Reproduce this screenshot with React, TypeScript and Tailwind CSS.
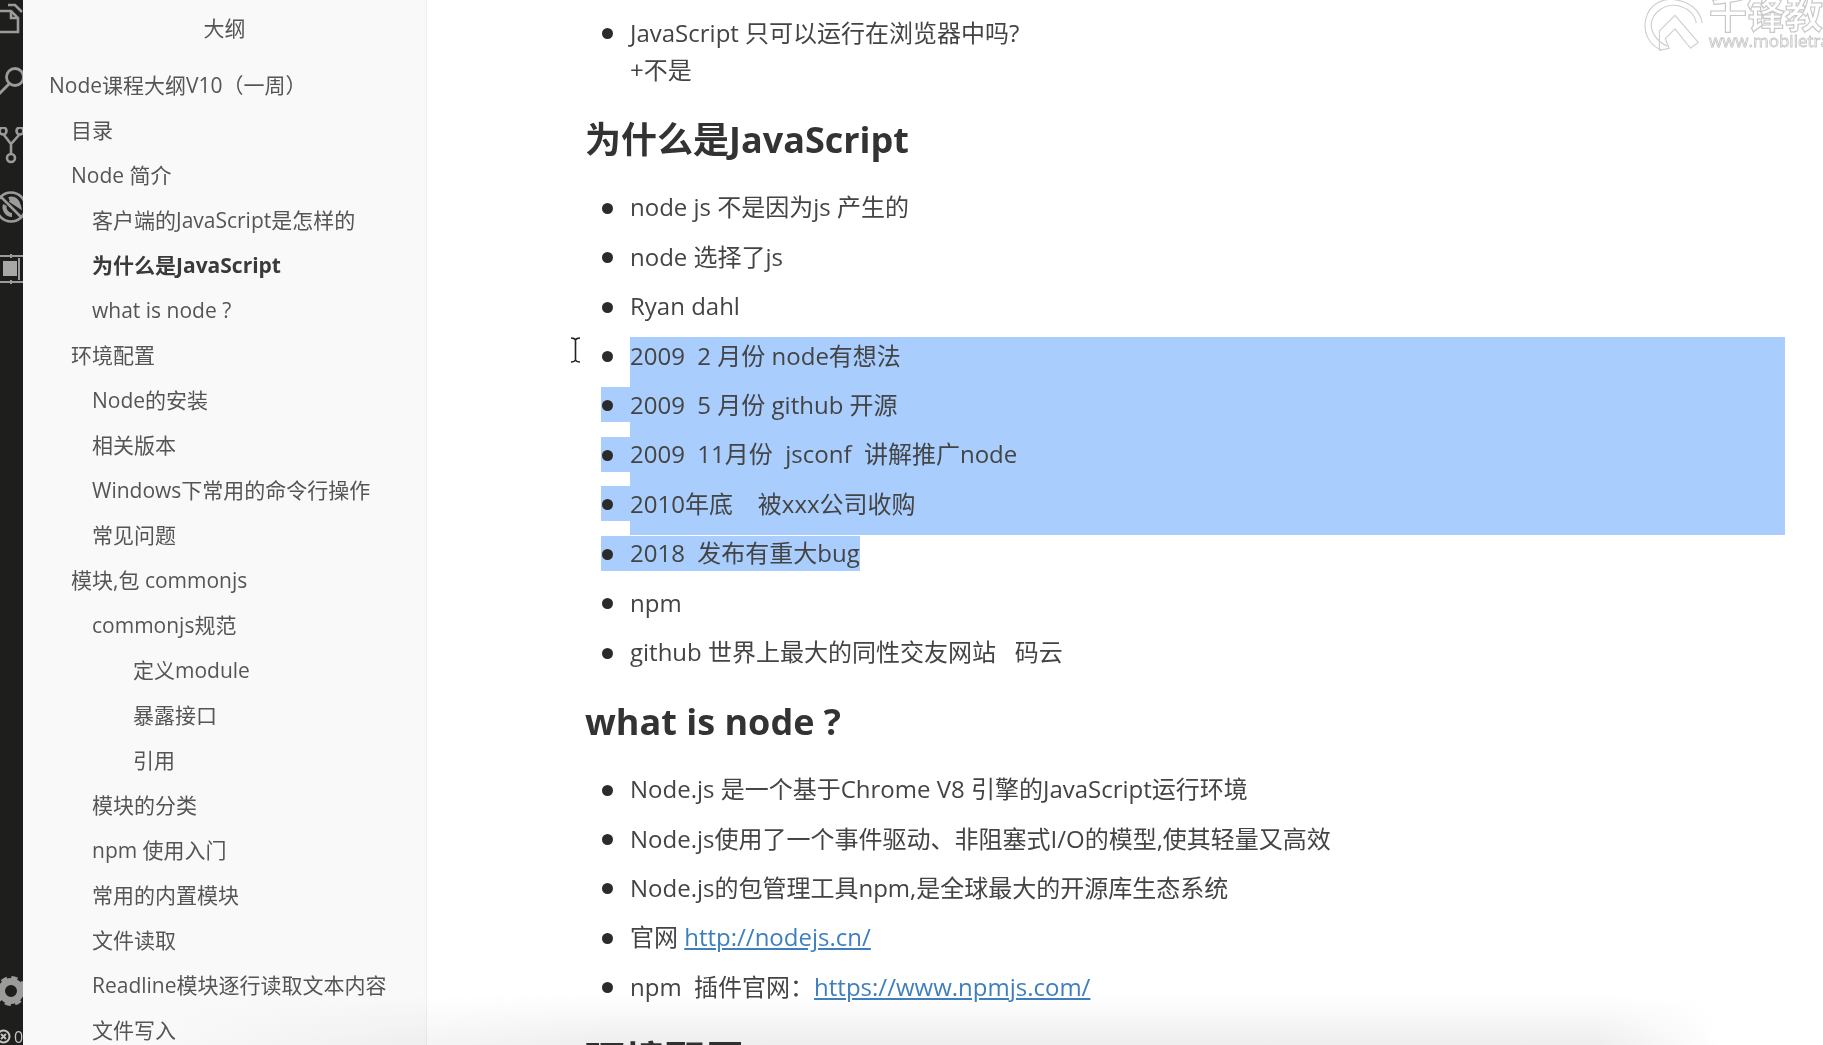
const outline: [string, number, boolean?][] = [
  ["Node课程大纲V10（一周）", 0],
  ["目录", 1],
  ["Node 简介", 1],
  ["客户端的JavaScript是怎样的", 2],
  ["为什么是JavaScript", 2, true],
  ["what is node ?", 2],
  ["环境配置", 1],
  ["Node的安装", 2],
  ["相关版本", 2],
  ["Windows下常用的命令行操作", 2],
  ["常见问题", 2],
  ["模块,包 commonjs", 1],
  ["commonjs规范", 2],
  ["定义module", 3],
  ["暴露接口", 3],
  ["引用", 3],
  ["模块的分类", 2],
  ["npm 使用入门", 2],
  ["常用的内置模块", 2],
  ["文件读取", 2],
  ["Readline模块逐行读取文本内容", 2],
  ["文件写入", 2],
];

function OutlineRow({ text, level, bold }: { text: string; level: number; bold?: boolean }) {
  const pad = ["pl-[26px]", "pl-[48px]", "pl-[69px]", "pl-[110px]"][level];
  return (
    <div className={`h-[45px] leading-[45px] whitespace-nowrap ${pad} ${bold ? "font-bold text-[#3a3a3a]" : "text-[#555555]"}`}>
      {text}
    </div>
  );
}

function Bullet({ children, band }: { children: React.ReactNode; band?: boolean }) {
  return (
    <li className="relative flex h-[49.45px] items-center whitespace-pre">
      <span className="relative flex h-[35px] w-[45px] shrink-0 items-center pl-[17px]">
        {band && <span className="absolute inset-y-0 left-[16px] right-0 bg-[#a9cdfd]" />}
        <span className="relative mt-[2px] h-[11px] w-[11px] rounded-full bg-[#2b2b2b]" />
      </span>
      {children}
    </li>
  );
}

function ActivityBar() {
  const s = "#9b9b99";
  return (
    <div className="flex h-full w-[23px] shrink-0 flex-col justify-between overflow-hidden bg-[#1e1e1c]">
      <div className="flex flex-col">
        <svg width="23" height="36" viewBox="0 0 23 36" fill="none" stroke={s} strokeWidth="2.6">
          <path d="M-2 11H11L18 18V32H-2" />
          <path d="M11 11V18H18" />
          <path d="M8 5H15L22 12" />
        </svg>
        <svg className="mt-[28px]" width="23" height="36" viewBox="0 0 23 36" fill="none" stroke={s} strokeWidth="2.8">
          <circle cx="15" cy="13" r="8.5" />
          <path d="M9 20L-1 30" />
        </svg>
        <svg className="mt-[27px]" width="23" height="37" viewBox="0 0 23 37" fill="none" stroke={s} strokeWidth="2.6">
          <circle cx="3" cy="4" r="3.5" />
          <circle cx="20" cy="4" r="3.5" />
          <circle cx="11" cy="31" r="4" />
          <path d="M4 8L11 17L19 8M11 17V27" />
        </svg>
        <svg className="mt-[25px]" width="23" height="36" viewBox="0 0 23 36" fill="none" stroke={s} strokeWidth="2.6">
          <circle cx="11" cy="18" r="14.500" />
          <path d="M0 7L22 29" />
          <path d="M9 10C14 8 18 12 19 17L10 11M5 16C3 20 7 26 12 26" strokeWidth="4" />
        </svg>
        <svg className="mt-[29px]" width="23" height="30" viewBox="0 0 23 30">
          <path d="M-2 2H23M-2 28H23M11 0V4M11 26V30M19 4V26" stroke={s} strokeWidth="2" fill="none" />
          <rect x="3" y="7" width="14" height="15" fill="#a8a8a6" />
        </svg>
      </div>
      <div className="flex flex-col">
        <svg width="23" height="32" viewBox="0 0 23 32" fill="none">
          <circle cx="11" cy="16" r="9.500" stroke="#9b9b99" strokeWidth="7" />
          <circle cx="11" cy="16" r="13" stroke="#9b9b99" strokeWidth="4" strokeDasharray="6 4.2" />
        </svg>
        <div className="mt-[21px] flex h-[17px] items-center">
          <svg className="-ml-[4px] shrink-0" width="15" height="15" viewBox="0 0 15 15" fill="none" stroke="#c4c4c4" strokeWidth="2">
            <circle cx="7.500" cy="7.500" r="6" />
            <path d="M5 5L10 10M10 5L5 10" />
          </svg>
          <span className="ml-[3px] text-[16px] leading-none text-[#c4c4c4]">0</span>
        </div>
      </div>
    </div>
  );
}

export default function App() {
  return (
    <div className="relative flex h-[1045px] w-[1823px] overflow-hidden bg-white text-[21px] text-[#444444] blur-[0.4px] font-['Open_Sans','Noto_Sans_CJK_SC',sans-serif]">
      <ActivityBar />
      <aside className="h-full w-[404px] shrink-0 overflow-hidden border-r border-[#efefef] bg-[#f9f9f9]">
        <div className="h-[62.5px] pt-[8px] text-center leading-[40px] text-[#555555]">大纲</div>
        {outline.map(([t, l, b]) => (
          <OutlineRow key={t} text={t} level={l} bold={b} />
        ))}
      </aside>

      <main className="min-w-0 flex-1 pl-[158px] pt-[14px] text-[24px] text-[#444444]">
        <ul>
          <li className="relative flex whitespace-pre leading-[37px]">
            <span className="flex h-[37px] w-[45px] shrink-0 items-center pl-[17px]">
              <span className="mt-[2px] h-[11px] w-[11px] rounded-full bg-[#2b2b2b]" />
            </span>
            <div>
              JavaScript 只可以运行在浏览器中吗?
              <br />
              +不是
            </div>
          </li>
        </ul>
        <h2 className="mt-[26.5px] h-[50px] text-[36px] font-bold leading-[50px] text-[#333333]">为什么是JavaScript</h2>

        <ul className="relative mt-[18px]">
          <span className="absolute left-[45px] top-[154px] h-[198px] w-[1155px] bg-[#a9cdfd]" />
          <Bullet>node js 不是因为js 产生的</Bullet>
          <Bullet>node 选择了js</Bullet>
          <Bullet>Ryan dahl</Bullet>
          <Bullet>
            <span className="relative">2009  2 月份 node有想法</span>
          </Bullet>
          <Bullet band>
            <span className="relative">2009  5 月份 github 开源</span>
          </Bullet>
          <Bullet band>
            <span className="relative">2009  11月份  jsconf  讲解推广node</span>
          </Bullet>
          <Bullet band>
            <span className="relative">2010年底    被xxx公司收购</span>
          </Bullet>
          <Bullet band>
            <span className="relative flex h-[35px] items-center bg-[#a9cdfd]">2018  发布有重大bug</span>
          </Bullet>
          <Bullet>npm</Bullet>
          <Bullet>github 世界上最大的同性交友网站   码云</Bullet>
        </ul>

        <h2 className="mt-[20px] h-[50px] text-[36px] font-bold leading-[50px] text-[#333333]">what is node ?</h2>

        <ul className="mt-[17.5px]">
          <Bullet>Node.js 是一个基于Chrome V8 引擎的JavaScript运行环境</Bullet>
          <Bullet>Node.js使用了一个事件驱动、非阻塞式I/O的模型,使其轻量又高效</Bullet>
          <Bullet>Node.js的包管理工具npm,是全球最大的开源库生态系统</Bullet>
          <Bullet>
            <span>
              官网 <span className="text-[#3f7fbf] underline">http://nodejs.cn/</span>
            </span>
          </Bullet>
          <Bullet>
            <span>
              npm  插件官网：<span className="text-[#3f7fbf] underline">https://www.npmjs.com/</span>
            </span>
          </Bullet>
        </ul>

        <h1 className="mt-[23px] h-[50px] text-[40px] font-bold leading-[50px] text-[#333333]">环境配置</h1>
      </main>

      {/* I-beam text cursor */}
      <svg className="absolute left-[570px] top-[337px]" width="11" height="26" viewBox="0 0 11 26" fill="none" stroke="#222222" strokeWidth="1.6">
        <path d="M1 1C3 1 5 2 5.500 3C6 2 8 1 10 1M5.500 3V23M1 25C3 25 5 24 5.500 23C6 24 8 25 10 25" />
      </svg>

      {/* Watermark */}
      <div className="absolute left-[1640px] top-[-7px] flex h-[70px] w-[190px] overflow-hidden">
        <svg className="shrink-0" width="68" height="62" viewBox="0 0 70 62" fill="none" stroke="#cfcfcf" strokeWidth="1.2">
          <path d="M22 58C8 52 3 38 6 26C9 12 22 4 36 6C50 8 62 16 64 30" />
          <path d="M28 54C16 48 10 38 12 28C15 18 26 10 38 12C48 14 56 20 58 30" />
          <path d="M20 38L36 22L60 50L52 56L36 36L26 46L30 56L20 58Z" />
        </svg>
        <div className="ml-[1px] flex flex-col">
          <span className="whitespace-nowrap text-[38px] font-bold leading-[40px] text-white [-webkit-text-stroke:1.2px_#c8c8c8]">千锋教育</span>
          <span className="whitespace-nowrap text-[17px] leading-[16px] text-white [-webkit-text-stroke:0.8px_#c4c4c4]">www.mobiletrain.org</span>
        </div>
      </div>

      {/* Video-player shadow along the bottom edge */}
      <div className="pointer-events-none absolute inset-x-0 bottom-0 h-[50px] bg-gradient-to-t from-[#eeeeee] to-transparent mix-blend-multiply [mask-image:linear-gradient(to_right,transparent_150px,black_600px,black_1600px,transparent_1720px)]" />
    </div>
  );
}
